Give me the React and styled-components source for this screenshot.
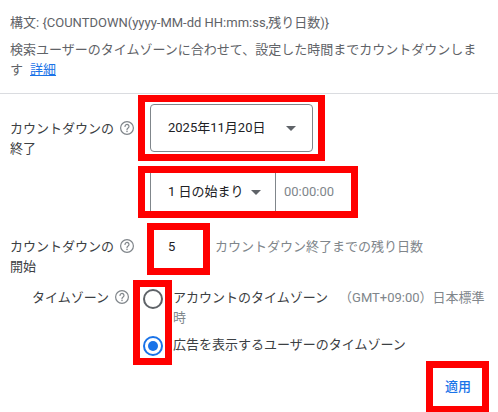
import React from 'react';
import styled, { createGlobalStyle } from 'styled-components';

const GlobalStyle = createGlobalStyle`
    html, body {
        margin: 0;
        padding: 0;
        background: #fff;
    }
    * {
        box-sizing: border-box;
    }
`;

const Page = styled.div`
    position: relative;
    width: 498px;
    height: 412px;
    overflow: hidden;
    background: #fff;
    font-family: Roboto, 'Noto Sans CJK JP', sans-serif;
    font-size: 13px;
    line-height: 20px;
    color: #3c4043;
`;

const Intro = styled.div`
    height: 94px;
    padding: 13px 10px 0;
    border-bottom: 1px solid #dadce0;
    color: #5f6368;
`;
const Syntax = styled.div`
    margin-bottom: 7px;
`;
const Description = styled.div``;
const MoreLink = styled.a`
    margin-left: 7px;
    color: #1a73e8;
    text-decoration: underline;
`;

const Row = styled.div`
    display: flex;
    height: ${(p) => p.$height}px;
    padding-top: ${(p) => p.$top || 0}px;
`;
const LabelCell = styled.div`
    flex: none;
    width: 150px;
    padding-left: 10px;
    padding-top: ${(p) => p.$top || 0}px;
`;
const LabelLine = styled.div`
    display: flex;
    align-items: center;
    gap: 5px;
    color: #3c4043;
`;
const ZoneLabel = styled(LabelLine)`
    flex: none;
    align-self: flex-start;
    width: 130px;
    justify-content: flex-end;
`;
const Help = styled.svg`
    width: 16px;
    height: 16px;
    flex: none;
    margin-top: -3px;
    color: #80868b;
`;

const Annotated = styled.div`
    position: relative;
`;
const Highlight = styled.div`
    position: absolute;
    top: ${(p) => p.$top}px;
    left: ${(p) => p.$left}px;
    width: ${(p) => p.$width}px;
    height: ${(p) => p.$height}px;
    border: 7px solid #ff0000;
    pointer-events: none;
`;

const DateSelect = styled.div`
    display: flex;
    align-items: center;
    justify-content: space-between;
    width: 163px;
    height: 48px;
    padding: 0 16px 0 17px;
    border: 1px solid #80868b;
    border-radius: 4px;
    color: #202124;
`;
const Caret = styled.span`
    width: 0;
    height: 0;
    border-left: 5px solid transparent;
    border-right: 5px solid transparent;
    border-top: 5px solid #5f6368;
`;

const TimeGroup = styled.div`
    display: flex;
    height: 52px;
    width: 200px;
    border-left: 1px solid #80868b;
`;
const TimeSelect = styled.div`
    display: flex;
    align-items: center;
    gap: 7px;
    width: 125px;
    padding-left: 17px;
    border-right: 1px solid #80868b;
    color: #202124;
`;
const TimeValue = styled.div`
    display: flex;
    align-items: center;
    padding-left: 8px;
    color: #80868b;
`;

const DaysField = styled.div`
    display: flex;
    align-items: center;
    width: 65px;
    height: 48px;
    padding-left: 18px;
    color: #202124;
`;
const DaysHint = styled.div`
    display: flex;
    align-items: center;
    height: 48px;
    color: #80868b;
`;

const ZoneRow = styled.div`
    display: flex;
    padding-top: 13px;
`;
const RadioList = styled(Annotated)`
    flex: 1;
    margin-left: 13px;
    padding-right: 10px;
`;
const RadioRow = styled.div`
    display: flex;
    gap: 10px;
    margin-bottom: ${(p) => p.$gap || 0}px;
    color: #3c4043;
`;
const Radio = styled.span`
    position: relative;
    flex: none;
    width: 20px;
    height: 20px;
    margin-top: 1px;
    border-radius: 50%;
    border: 2px solid ${(p) => (p.$checked ? '#1a73e8' : '#5f6368')};

    &::after {
        content: '';
        display: ${(p) => (p.$checked ? 'block' : 'none')};
        position: absolute;
        inset: 3px;
        border-radius: 50%;
        background: #1a73e8;
    }
`;
const RadioText = styled.div``;
const ZoneDetail = styled.span`
    margin-left: 11px;
    color: #80868b;
`;

const Footer = styled.div`
    display: flex;
    justify-content: flex-end;
    padding: 21px 27px 0 0;
`;
const ApplyButton = styled.div`
    color: #1a73e8;
    font-weight: 500;
`;

function HelpIcon() {
    return (
        <Help viewBox="0 0 24 24" fill="none" stroke="currentColor" strokeWidth="1.8">
            <circle cx="12" cy="12" r="9.6" />
            <path d="M9 9.6a3 3 0 1 1 4.7 2.5c-1 .7-1.7 1.3-1.7 2.6" strokeLinecap="round" />
            <circle cx="12" cy="17.4" r="1.1" fill="currentColor" stroke="none" />
        </Help>
    );
}

export default function App() {
    return (
        <Page>
            <GlobalStyle />
            <Intro>
                <Syntax>構文: {'{COUNTDOWN(yyyy-MM-dd HH:mm:ss,残り日数)}'}</Syntax>
                <Description>
                    検索ユーザーのタイムゾーンに合わせて、設定した時間までカウントダウンします
                    <MoreLink>詳細</MoreLink>
                </Description>
            </Intro>

            <Row $height={72} $top={10}>
                <LabelCell $top={15}>
                    <LabelLine>
                        カウントダウンの
                        <HelpIcon />
                    </LabelLine>
                    <LabelLine>終了</LabelLine>
                </LabelCell>
                <Annotated>
                    <DateSelect>
                        2025年11月20日
                        <Caret />
                    </DateSelect>
                    <Highlight $top={-9} $left={-12} $width={187} $height={66} />
                </Annotated>
            </Row>

            <Row $height={57}>
                <LabelCell />
                <Annotated>
                    <TimeGroup>
                        <TimeSelect>
                            1 日の始まり
                            <Caret />
                        </TimeSelect>
                        <TimeValue>00:00:00</TimeValue>
                    </TimeGroup>
                    <Highlight $top={0} $left={-12} $width={220} $height={52} />
                </Annotated>
            </Row>

            <Row $height={52}>
                <LabelCell $top={14}>
                    <LabelLine>
                        カウントダウンの
                        <HelpIcon />
                    </LabelLine>
                    <LabelLine>開始</LabelLine>
                </LabelCell>
                <Annotated>
                    <DaysField>5</DaysField>
                    <Highlight $top={0} $left={-3} $width={63} $height={52} />
                </Annotated>
                <DaysHint>カウントダウン終了までの残り日数</DaysHint>
            </Row>

            <ZoneRow>
                <ZoneLabel>
                    タイムゾーン
                    <HelpIcon />
                </ZoneLabel>
                <RadioList>
                    <RadioRow $gap={7}>
                        <Radio />
                        <RadioText>
                            アカウントのタイムゾーン
                            <ZoneDetail>（GMT+09:00）日本標準時</ZoneDetail>
                        </RadioText>
                    </RadioRow>
                    <RadioRow>
                        <Radio $checked />
                        <RadioText>広告を表示するユーザーのタイムゾーン</RadioText>
                    </RadioRow>
                    <Highlight $top={-8} $left={-10} $width={39} $height={85} />
                </RadioList>
            </ZoneRow>

            <Footer>
                <Annotated>
                    <ApplyButton>適用</ApplyButton>
                    <Highlight $top={-16} $left={-19} $width={63} $height={52} />
                </Annotated>
            </Footer>
        </Page>
    );
}
